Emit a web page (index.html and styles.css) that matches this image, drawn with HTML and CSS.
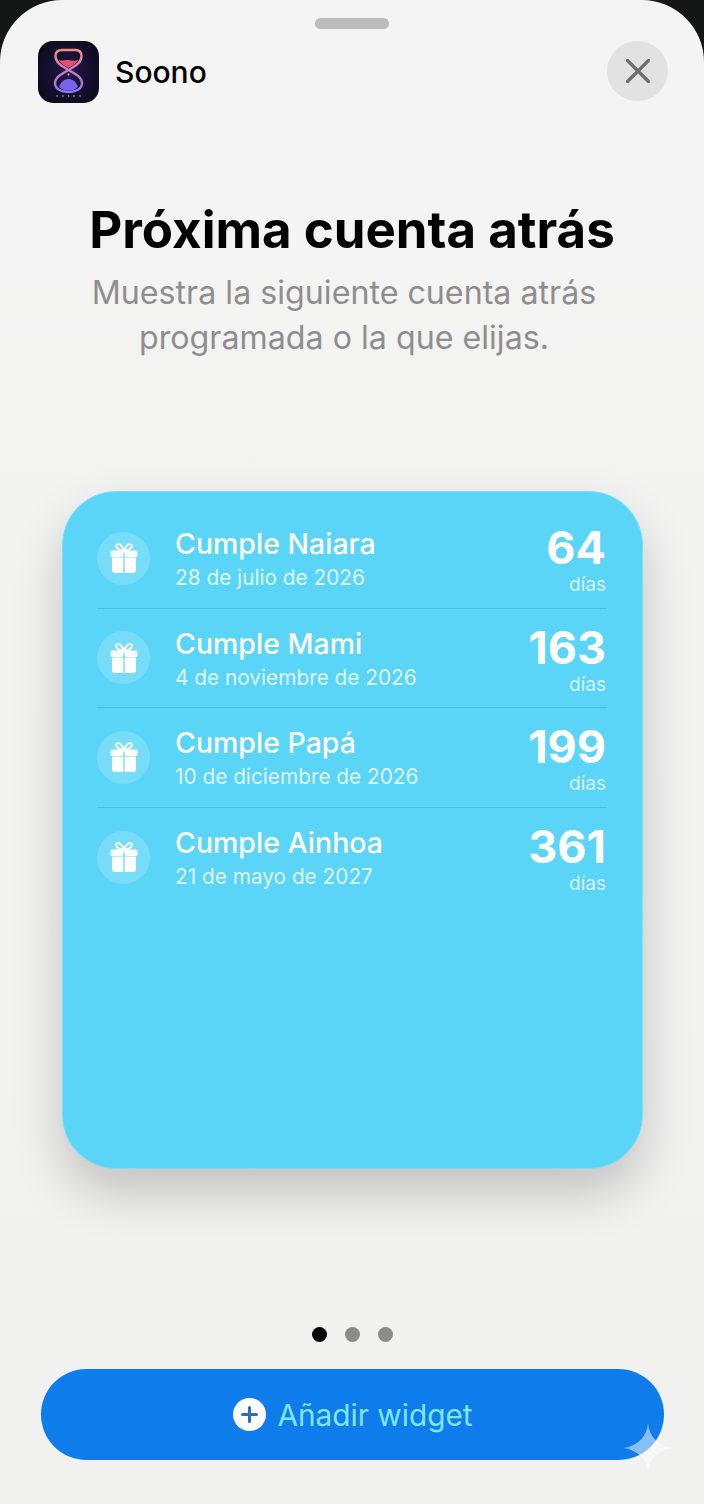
FILE: index.html
```html
<!DOCTYPE html>
<html lang="es">
<head>
    <meta charset="UTF-8">
    <meta name="viewport" content="width=device-width, initial-scale=1.0">
    <title>Soono</title>
    <link rel="stylesheet" href="styles.css">
</head>
<body>
    <svg class="defs" width="0" height="0">
        <defs>
            <symbol id="gift" viewBox="0 0 28 32">
                <path d="M14 9C12 3 9 1 7 2.500C5 4 6.500 8 14 9C21.500 8 23 4 21 2.500C19 1 16 3 14 9Z" fill="none" stroke="currentColor" stroke-width="2"/>
                <rect x="0.500" y="8.500" width="12.800" height="6.500" rx="1.500" fill="currentColor"/>
                <rect x="14.700" y="8.500" width="12.800" height="6.500" rx="1.500" fill="currentColor"/>
                <path d="M2 15.500H13.300V31H5Q2 31 2 28Z" fill="currentColor"/>
                <path d="M14.700 15.500H26V28Q26 31 23 31H14.700Z" fill="currentColor"/>
            </symbol>
        </defs>
    </svg>

    <div class="sheet">
        <div class="grabber"></div>

        <header class="header">
            <svg class="app-icon" viewBox="0 0 61 62">
                <defs>
                    <linearGradient id="glass" x1="0" y1="0" x2="0" y2="1">
                        <stop offset="0" stop-color="#ee8f86"/>
                        <stop offset="0.5" stop-color="#c77ac8"/>
                        <stop offset="1" stop-color="#8f78ee"/>
                    </linearGradient>
                    <radialGradient id="iconbg" cx="0.5" cy="0.5" r="0.65">
                        <stop offset="0" stop-color="#221848"/>
                        <stop offset="1" stop-color="#0b0918"/>
                    </radialGradient>
                </defs>
                <rect width="61" height="62" rx="15" fill="url(#iconbg)"/>
                <path d="M30.500 29C24 25 17.500 22 17.500 15C17.500 11 20 9 24 9H37C41 9 43.500 11 43.500 15C43.500 22 37 25 30.500 29C24 33 17 36 17 42C17 48 23 51 30.500 51C38 51 44 48 44 42C44 36 37 33 30.500 29Z" fill="none" stroke="url(#glass)" stroke-width="2.400"/>
                <path d="M20.500 19C24 20.500 27 18.500 30.500 19C34 19.500 37 20.500 40.500 19C39 22 34 25 30.500 27C27 25 22 22 20.500 19Z" fill="#e2506e"/>
                <path d="M21 46C23 40 27 38 30.500 38C34 38 38 40 40 46C37 49 34 49.500 30.500 49.500C27 49.500 24 49 21 46Z" fill="#7a63ea"/>
                <circle cx="30.500" cy="33.500" r="1" fill="#d9c9f5"/>
                <g fill="#b9b4d6">
                    <circle cx="19" cy="55" r="0.800"/>
                    <circle cx="25" cy="55" r="0.800"/>
                    <circle cx="30.500" cy="55" r="0.800"/>
                    <circle cx="36" cy="55" r="0.800"/>
                    <circle cx="42" cy="55" r="0.800"/>
                </g>
            </svg>
            <span class="app-name">Soono</span>
            <button class="close" aria-label="Cerrar">
                <svg viewBox="0 0 24 24" width="24" height="24">
                    <path d="M1.500 1.500L22.500 22.500M22.500 1.500L1.500 22.500" stroke="#6e6e6e" stroke-width="3.200" stroke-linecap="round"/>
                </svg>
            </button>
        </header>

        <h1>Próxima cuenta atrás</h1>
        <p class="subtitle">Muestra la siguiente cuenta atrás<br>programada o la que elijas.</p>

        <section class="widget">
            <div class="row">
                <div class="row-icon"><svg width="28" height="32"><use href="#gift"/></svg></div>
                <div class="row-text">
                    <div class="row-name">Cumple Naiara</div>
                    <div class="row-date">28 de julio de 2026</div>
                </div>
                <div class="row-count">
                    <div class="count-num">64</div>
                    <div class="count-unit">días</div>
                </div>
            </div>
            <div class="row">
                <div class="row-icon"><svg width="28" height="32"><use href="#gift"/></svg></div>
                <div class="row-text">
                    <div class="row-name">Cumple Mami</div>
                    <div class="row-date">4 de noviembre de 2026</div>
                </div>
                <div class="row-count">
                    <div class="count-num">163</div>
                    <div class="count-unit">días</div>
                </div>
            </div>
            <div class="row">
                <div class="row-icon"><svg width="28" height="32"><use href="#gift"/></svg></div>
                <div class="row-text">
                    <div class="row-name">Cumple Papá</div>
                    <div class="row-date">10 de diciembre de 2026</div>
                </div>
                <div class="row-count">
                    <div class="count-num">199</div>
                    <div class="count-unit">días</div>
                </div>
            </div>
            <div class="row">
                <div class="row-icon"><svg width="28" height="32"><use href="#gift"/></svg></div>
                <div class="row-text">
                    <div class="row-name">Cumple Ainhoa</div>
                    <div class="row-date">21 de mayo de 2027</div>
                </div>
                <div class="row-count">
                    <div class="count-num">361</div>
                    <div class="count-unit">días</div>
                </div>
            </div>
        </section>

        <div class="dots">
            <span class="dot active"></span>
            <span class="dot"></span>
            <span class="dot"></span>
        </div>

        <button class="add-btn">
            <svg class="plus" viewBox="0 0 33 33" width="33" height="33">
                <circle cx="16.500" cy="16.500" r="16.500" fill="#fff"/>
                <path d="M16.500 9.500V23.500M9.500 16.500H23.500" stroke="#2a6fb5" stroke-width="3" stroke-linecap="round"/>
            </svg>
            Añadir widget
        </button>

        <!-- destello sobre el boton -->
        <svg class="sparkle" viewBox="0 0 48 48" width="48" height="48">
            <path d="M24 0C26 13 33 21 48 24C33 27 26 35 24 48C22 35 15 27 0 24C15 21 22 13 24 0Z" fill="#fff" fill-opacity="0.5"/>
        </svg>
    </div>
</body>
</html>
```

FILE: styles.css
```css
* {
    box-sizing: border-box;
}
body {
    font-family: 'Inter', 'Liberation Sans', sans-serif;
    background-color: #141715;
    margin: 0;
}
.defs {
    position: absolute;
}
.sheet {
    position: relative;
    height: 1504px;
    overflow: hidden;
    background: linear-gradient(#f4f4f4, #f1f1ef);
    border-radius: 62px 62px 0 0;
    padding-top: 18px;
}
.grabber {
    width: 74px;
    height: 11px;
    margin: 0 auto 12px;
    background-color: #bcbcbc;
    border-radius: 6px;
}
.header {
    display: flex;
    align-items: center;
    height: 62px;
    padding: 0 36px 0 38px;
}
.app-icon {
    width: 61px;
    height: 62px;
    margin-right: 16px;
}
.app-name {
    font-size: 30px;
    font-weight: 500;
    color: #000;
    flex: 1;
}
.close {
    display: flex;
    align-items: center;
    justify-content: center;
    align-self: flex-start;
    width: 61px;
    height: 60px;
    padding: 0;
    border: none;
    border-radius: 50%;
    background-color: #e2e2e2;
}
h1 {
    margin: 98px 0 11px;
    font-size: 51px;
    line-height: 58px;
    font-weight: 700;
    text-align: center;
    color: #000;
}
.subtitle {
    margin: 0 0 131px;
    padding-right: 16px;
    font-size: 32.200px;
    line-height: 45px;
    text-align: center;
    color: #8e8e8e;
}
.widget {
    width: 581px;
    height: 678px;
    margin: 0 0 158px 62px;
    padding: 17px 35px 0 34px;
    background-color: #5ad5f7;
    border: 1px solid #78e0fa;
    border-radius: 54px;
    box-shadow: 0 24px 50px rgba(0, 0, 0, 0.2);
    color: #fff;
}
.row {
    display: flex;
    align-items: center;
    height: 99.500px;
    border-bottom: 1px solid #47bfe0;
}
.row:last-child {
    border-bottom: none;
}
.row-icon {
    display: flex;
    align-items: center;
    justify-content: center;
    width: 53px;
    height: 53px;
    margin-right: 25px;
    border-radius: 50%;
    background-color: rgba(255, 255, 255, 0.18);
    color: #fff;
}
.row-text {
    flex: 1;
}
.row-name {
    font-size: 28.500px;
    line-height: 40px;
    font-weight: 500;
}
.row-date {
    font-size: 20.800px;
    line-height: 28px;
    color: #dff6fd;
}
.row-count {
    padding-right: 1px;
    text-align: right;
}
.count-num {
    font-size: 45px;
    line-height: 54px;
    font-weight: 700;
}
.count-unit {
    font-size: 19px;
    line-height: 20px;
    color: #d5f3fc;
}
.dots {
    display: flex;
    justify-content: center;
    gap: 18px;
    height: 15px;
    margin-bottom: 27px;
}
.dot {
    width: 15px;
    height: 15px;
    border-radius: 50%;
    background-color: #8b8b8b;
}
.dot.active {
    background-color: #000;
}
.add-btn {
    display: flex;
    align-items: center;
    justify-content: center;
    gap: 11px;
    width: 623px;
    height: 91px;
    margin-left: 41px;
    padding-left: 7px;
    border: none;
    border-radius: 46px;
    background-color: #0f7cec;
    color: #7fe6f7;
    font-family: inherit;
    font-size: 29.800px;
}
.sparkle {
    position: absolute;
    left: 624px;
    top: 1424px;
}
```
